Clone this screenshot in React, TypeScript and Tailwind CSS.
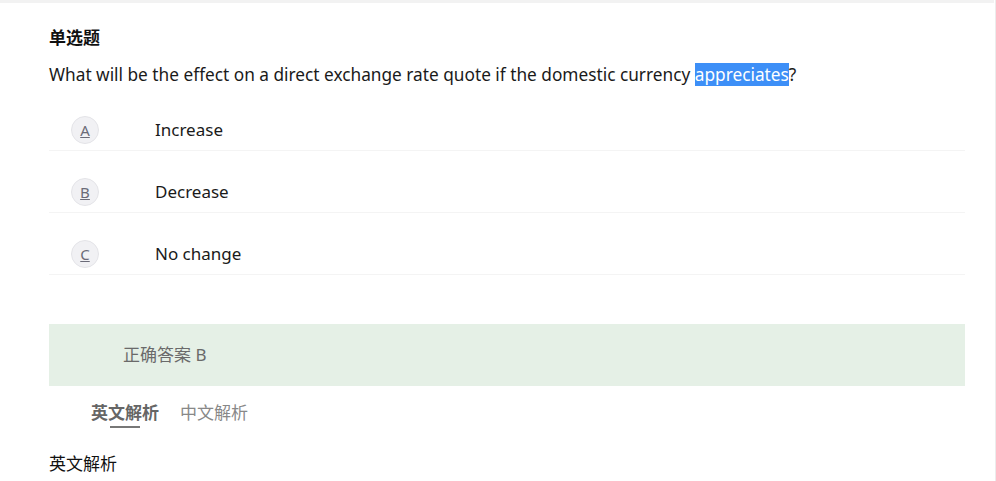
import React from "react";

const font = { fontFamily: '"Noto Sans", "Noto Sans CJK SC", sans-serif' };

export default function App() {
  const options = [
    { k: "A", t: "Increase" },
    { k: "B", t: "Decrease" },
    { k: "C", t: "No change" },
  ];
  return (
    <div className="w-[996px] h-[481px] bg-white overflow-hidden relative" style={font}>
      <div className="h-[3px] w-[994px] bg-[#f2f2f2]" />
      <div className="absolute right-0 top-0 h-full w-[1px] bg-[#ececec]" />
      <div className="ml-[49px] w-[916px]">
        <div className="mt-[23px] h-[24px] leading-[24px] text-[17px] font-bold text-[#111]">单选题</div>
        <div className="mt-[11px] h-[28px] leading-[28px] text-[17.25px] text-[#1a1a1a] whitespace-nowrap">
          What will be the effect on a direct exchange rate quote if the domestic currency{" "}
          <span className="bg-[#3d8ff7] text-white">appreciates</span>?
        </div>
        <div>
          {options.map((o) => (
            <div key={o.k} className="h-[62px] border-b border-[#f4f4f4] pt-[27px] flex items-start">
              <div className="ml-[22px] w-[28px] h-[28px] rounded-full bg-[#f1f1f4] border border-[#e4e4e8] flex items-center justify-center text-[15px] text-[#6b6b78] underline">
                {o.k}
              </div>
              <div className="ml-[56px] h-[28px] leading-[28px] text-[17px] text-[#1a1a1a]">{o.t}</div>
            </div>
          ))}
        </div>
        <div className="mt-[49px] h-[62px] bg-[#e5f0e6] flex items-center pl-[74px] text-[17px] text-[#6a6a6a]">
          正确答案 B
        </div>
        <div className="mt-[15px] flex pl-[42px] gap-[21px] text-[17px]">
          <div className="relative h-[24px] leading-[24px] font-bold text-[#666]">
            英文解析
            <div className="absolute left-[19px] top-[25px] w-[30px] h-[2px] bg-[#777]" />
          </div>
          <div className="h-[24px] leading-[24px] text-[#888]">中文解析</div>
        </div>
        <div className="mt-[27px] h-[24px] leading-[24px] text-[17px] text-[#111]">英文解析</div>
      </div>
    </div>
  );
}
